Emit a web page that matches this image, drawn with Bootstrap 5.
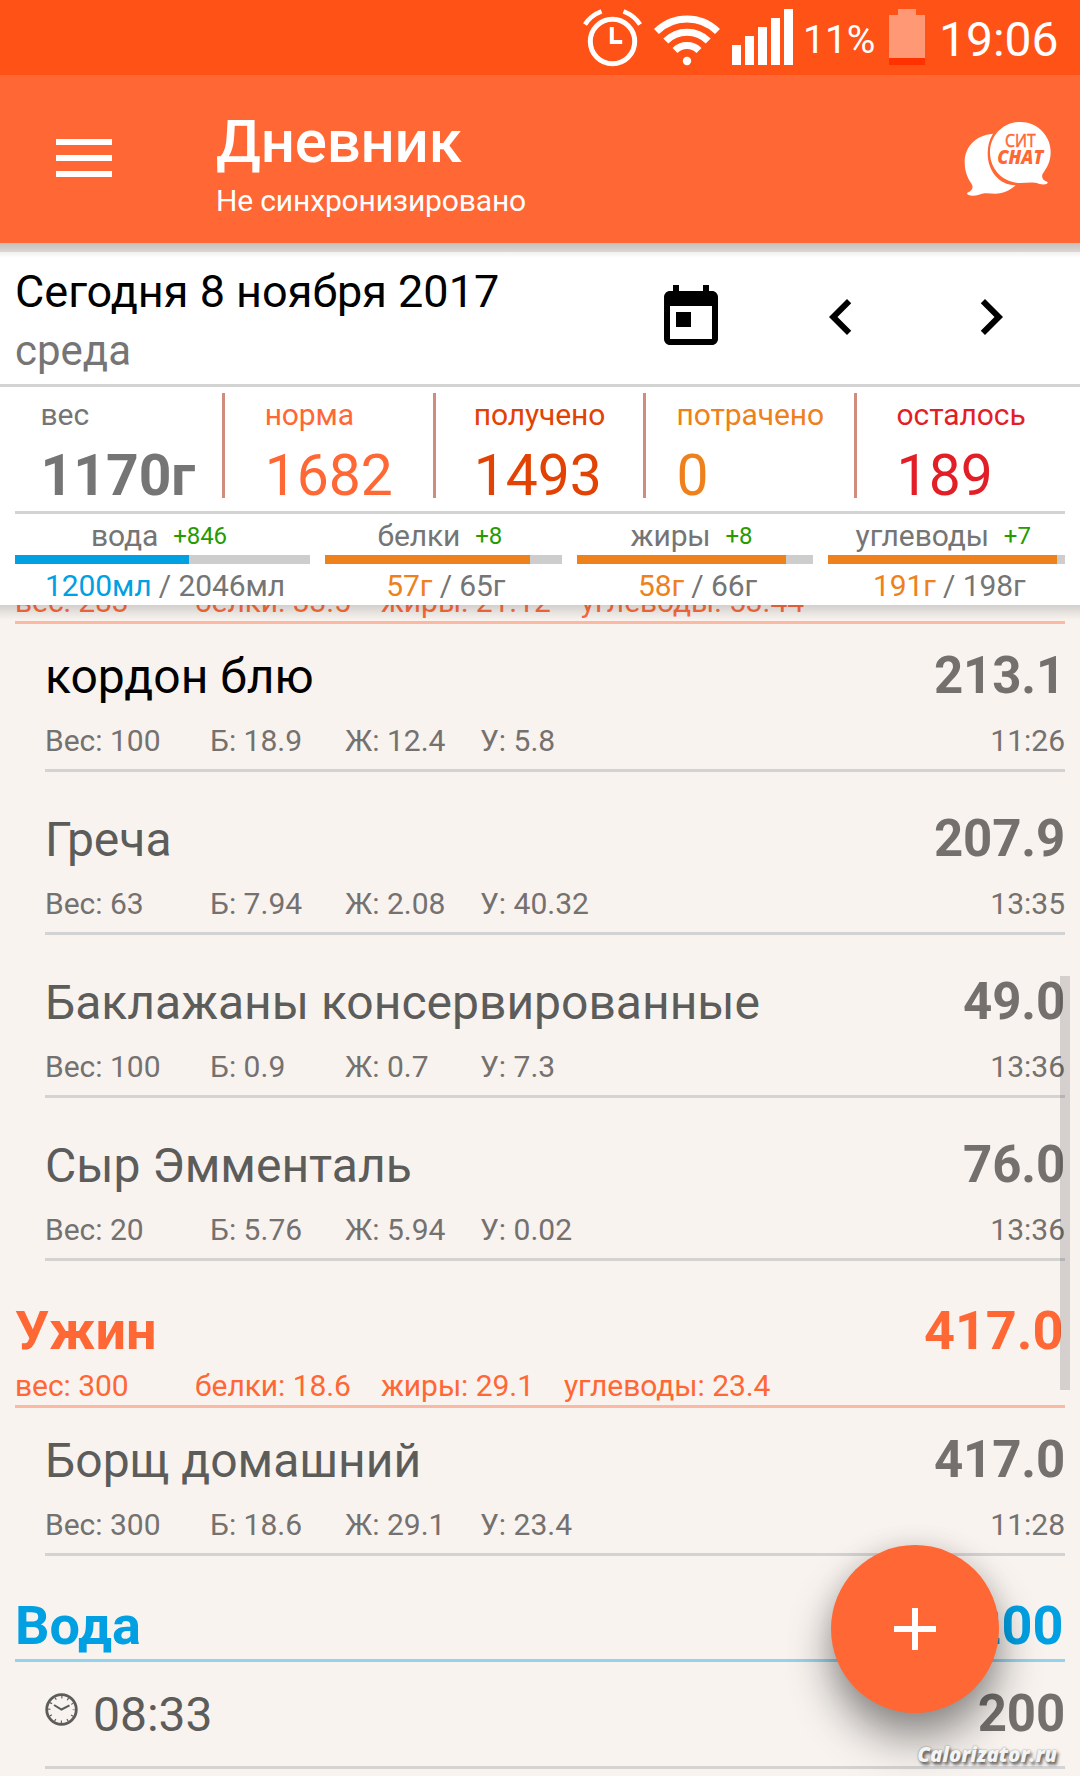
<!DOCTYPE html>
<html lang="ru">
<head>
<meta charset="utf-8">
<meta name="viewport" content="width=device-width, initial-scale=1">
<title>Дневник</title>
<link href="https://cdn.jsdelivr.net/npm/bootstrap@5.3.0/dist/css/bootstrap.min.css" rel="stylesheet">
<style>
body{font-family:Roboto,"Noto Sans",sans-serif;background:#f8f3ef;color:#757575;width:1080px;height:1776px;overflow:hidden;font-size:30px;line-height:36px}
svg{display:block;flex:none}
.statusbar{height:75px;background:#ff5217;color:#fff}
.appbar{height:168px;background:#ff6735;color:#fff;z-index:3}
.appbar::after,.summary::after{content:"";position:absolute;left:0;right:0;top:100%;height:15px;pointer-events:none}
.appbar::after{background:linear-gradient(#c5bfbc 0,#dcd6d2 8.5px,#f3f2f1 9.5px,#fff 15px)}
.summary{background:#fff;z-index:2}
.summary::after{background:linear-gradient(rgba(60,60,60,.2),rgba(60,60,60,.07) 60%,rgba(60,60,60,0))}
.burger{margin:64px 0 0 56px;width:56px}
.burger i{display:block;height:6px;background:#fff;margin-bottom:10px}
.ttl{font-size:60px;line-height:70px;font-weight:500;margin:32px 0 6px;letter-spacing:-.2px}
.subttl{letter-spacing:-.15px}
.heading{margin-left:104px}
.chat{width:90px;height:78px;margin:45px 27px 0 0}
.daterow{height:144px;border-bottom:3px solid #d3d3d3;padding:22px 53px 0 15px}
.today{font-size:45px;line-height:54px;color:#000;margin-bottom:7px}
.weekday{font-size:42px;line-height:50px}
.tools{gap:78px;margin-top:17px}
.chev{margin-top:-1px}
.stats{margin:6px 15px 0 14px;height:118px}
.stat-sep{width:3px;height:105px;background:#d08c7e;flex:none}
.stat{flex:1 1 0;padding-top:4px;letter-spacing:-.1px}
.stat-num{font-size:57px;line-height:44px;margin-top:21px;letter-spacing:0}
.nutri{margin:0 15px;border-top:3px solid #d3d3d3;height:94px;gap:15px;padding-top:4px;letter-spacing:-.1px}
.nut{flex:1 1 0}
.nut.first-nut{flex:0 0 295px}
.nut-label{height:37px;padding-right:7px}
.nut-val{padding-left:5px}
.delta{font-size:24px;line-height:24px;color:#259b00;margin-left:15px;padding-top:6px}
.nut .progress{height:9px;border-radius:0;background:#cdcdcd;margin:0 0 4px;--bs-progress-bar-transition:none}
.c-or{color:#ee811c}.c-bl{color:#00a0e3}.c-or2{color:#ff6735}.c-rd{color:#e24203}.c-red{color:#e21f26}
.bg-or{background:#ee811c}.bg-bl{background:#00a0e3}
.diary{height:1171px;overflow:hidden;padding:0 15px}
.meal{border-bottom:3px solid #fbb8a2;color:#ff6735;padding:38px 0 1px}
.meal.cut{padding-top:0;margin-top:-21px}
.meal.water{border-color:#93d3ec;color:#00a0e3;padding-bottom:2px}
.meal-t{font-size:54px;line-height:63px;font-weight:700;padding-right:1.5px}
.meal-m{margin-top:6px;letter-spacing:-.06px}
.meal-m span{margin-right:30px;white-space:nowrap}
.meal-m span:first-child{width:150px}
.food{margin-left:30px;border-bottom:3px solid #d3d3d3;padding:24px 0 10px}
.food + .food{margin-top:15px}
.food-n{font-size:48px;line-height:58px;color:#5c5c5b}
.food-k{font-size:51px;line-height:56px;font-weight:700;color:#73706e;letter-spacing:-.15px}
.food-m{margin-top:17px;color:#74716f}
.food-m span{width:135px}
.food-m span:first-child{width:165px}
.food.drink{padding-bottom:22px}
.clock{margin:7px 15px 0 0}
.scroller{right:10px;top:976px;width:10px;height:414px;background:rgba(0,0,0,.14);z-index:4}
.fab{left:831px;top:1545px;width:168px;height:168px;background:#ff6735;z-index:5;box-shadow:0 26px 44px rgba(0,0,0,.42),0 0 26px rgba(0,0,0,.1)}
.wm{right:23px;top:1740px;z-index:6;font:italic 800 20.5px/28px "Open Sans",sans-serif;letter-spacing:-.1px;color:#f4f4f4;text-shadow:2px 3px 3px rgba(0,0,0,.55),0 0 2px rgba(0,0,0,.45)}
</style>
<script src="https://cdn.jsdelivr.net/npm/bootstrap@5.3.0/dist/js/bootstrap.bundle.min.js"></script>
</head>
<body class="position-relative m-0">
<div class="statusbar d-flex">
  <svg class="ms-auto" width="510" height="75" viewBox="570 0 510 75" font-family="Roboto,sans-serif" fill="#fff">
    <g fill="none" stroke="#fff" stroke-width="5">
      <circle cx="612.5" cy="41.5" r="22.2"/>
      <path d="M585 24.5Q590.500 15.500 601.500 11.300M640 24.500Q634.500 15.500 623.500 11.300" stroke-width="4.600"/>
      <path d="M611.800 27V42H622.200" stroke-width="4"/>
    </g>
    <g fill="none" stroke="#fff" stroke-width="7">
      <path d="M656.500 31.500A43.500 43.500 0 0 1 717.500 31.500M665.800 41A30 30 0 0 1 708.200 41M675 50.500A17 17 0 0 1 699 50.500"/>
    </g>
    <circle cx="687" cy="61" r="4.200"/>
    <path d="M732 45h9v20h-9zM745 36h9v29h-9zM758 27h9v38h-9zM771 18h9v47h-9zM784 9h9v56h-9z"/>
    <path fill="#ff9875" d="M898 9h18v6h9v43h-36V15h9z"/><path fill="#ff3200" d="M889 58h36v7h-36z"/>
    <text x="803" y="53" font-size="39">11%</text>
    <text x="939" y="55.700" font-size="48">19:06</text>
  </svg>
</div>
<header class="appbar d-flex position-relative">
  <div class="burger"><i></i><i></i><i></i></div>
  <div class="heading"><div class="ttl">Дневник</div><div class="subttl">Не синхронизировано</div></div>
  <svg class="chat ms-auto" viewBox="130 90 270 234" fill="#fff">
    <path d="M220 131C166 136 135 172 135 216C135 250 147 268 157 284C162 295 155 303 142 309C142 317 160 320 178 314C197 307 210 311 227 311C252 311 272 300 288 286C236 286 204 240 204 190C204 168 209 148 220 131z"/>
    <path d="M302 96C352 96 393 136 393 186C393 215 382 233 369 251C364 262 370 271 384 276C385 284 371 285 357 281C340 275 321 279 302 279C250 279 211 238 211 187C211 137 250 96 302 96z"/>
    <g fill="#ff6735" font-family="'Open Sans',sans-serif">
      <text x="256" y="171" font-size="53" textLength="92" lengthAdjust="spacingAndGlyphs" font-weight="500" stroke="#ff6735" stroke-width="1.500">СИТ</text>
      <text x="233" y="223" font-size="58" font-weight="800" font-style="italic" textLength="138" lengthAdjust="spacingAndGlyphs">CHAT</text>
    </g>
  </svg>
</header>
<section class="summary position-relative">
  <div class="daterow d-flex justify-content-between align-items-start">
    <div><div class="today">Сегодня 8 ноября 2017</div><div class="weekday">среда</div></div>
    <div class="tools d-flex">
      <svg width="72" height="72" viewBox="0 0 24 24"><path d="M19 3h-1V1h-2v2H8V1H6v2H5c-1.110 0-1.990.9-1.990 2L3 19c0 1.100.89 2 2 2h14c1.100 0 2-.9 2-2V5c0-1.100-.9-2-2-2zm0 16H5V8h14v11zM7 10h5v5H7z"/></svg>
      <svg class="chev" width="72" height="72" viewBox="0 0 24 24"><path d="M15.410 7.410L14 6l-6 6 6 6 1.410-1.410L10.830 12z"/></svg>
      <svg class="chev" width="72" height="72" viewBox="0 0 24 24"><path d="M10 6L8.590 7.410 13.170 12l-4.580 4.590L10 18l6-6z"/></svg>
    </div>
  </div>
  <div class="stats d-flex">
    <div class="stat d-flex justify-content-center"><div><div>вес</div><div class="stat-num fw-bold">1170г</div></div></div>
    <div class="stat-sep"></div>
    <div class="stat d-flex justify-content-center c-or2"><div><div>норма</div><div class="stat-num">1682</div></div></div>
    <div class="stat-sep"></div>
    <div class="stat d-flex justify-content-center c-rd"><div><div>получено</div><div class="stat-num">1493</div></div></div>
    <div class="stat-sep"></div>
    <div class="stat d-flex justify-content-center c-or"><div><div>потрачено</div><div class="stat-num">0</div></div></div>
    <div class="stat-sep"></div>
    <div class="stat d-flex justify-content-center c-red"><div><div>осталось</div><div class="stat-num">189</div></div></div>
  </div>
  <div class="nutri d-flex">
    <div class="nut first-nut"><div class="nut-label d-flex justify-content-center"><span>вода</span><span class="delta">+846</span></div><div class="progress"><div class="progress-bar bg-bl" style="width:59%"></div></div><div class="nut-val text-center"><span class="c-bl">1200мл</span> / 2046мл</div></div>
    <div class="nut"><div class="nut-label d-flex justify-content-center"><span>белки</span><span class="delta">+8</span></div><div class="progress"><div class="progress-bar bg-or" style="width:86.5%"></div></div><div class="nut-val text-center"><span class="c-or">57г</span> / 65г</div></div>
    <div class="nut"><div class="nut-label d-flex justify-content-center"><span>жиры</span><span class="delta">+8</span></div><div class="progress"><div class="progress-bar bg-or" style="width:88.3%"></div></div><div class="nut-val text-center"><span class="c-or">58г</span> / 66г</div></div>
    <div class="nut"><div class="nut-label d-flex justify-content-center"><span>углеводы</span><span class="delta">+7</span></div><div class="progress"><div class="progress-bar bg-or" style="width:96.7%"></div></div><div class="nut-val text-center"><span class="c-or">191г</span> / 198г</div></div>
  </div>
</section>
<main class="diary">
  <div class="meal cut"><div class="meal-m d-flex mt-0"><span>вес: 283</span><span>белки: 33.5</span><span>жиры: 21.12</span><span>углеводы: 53.44</span></div></div>
  <div class="food"><div class="d-flex justify-content-between align-items-baseline"><div class="food-n text-black">кордон блю</div><div class="food-k">213.1</div></div>
    <div class="food-m d-flex"><span>Вес: 100</span><span>Б: 18.9</span><span>Ж: 12.4</span><span>У: 5.8</span><div class="ms-auto">11:26</div></div></div>
  <div class="food"><div class="d-flex justify-content-between align-items-baseline"><div class="food-n">Греча</div><div class="food-k">207.9</div></div>
    <div class="food-m d-flex"><span>Вес: 63</span><span>Б: 7.94</span><span>Ж: 2.08</span><span>У: 40.32</span><div class="ms-auto">13:35</div></div></div>
  <div class="food"><div class="d-flex justify-content-between align-items-baseline"><div class="food-n">Баклажаны консервированные</div><div class="food-k">49.0</div></div>
    <div class="food-m d-flex"><span>Вес: 100</span><span>Б: 0.9</span><span>Ж: 0.7</span><span>У: 7.3</span><div class="ms-auto">13:36</div></div></div>
  <div class="food"><div class="d-flex justify-content-between align-items-baseline"><div class="food-n">Сыр Эмменталь</div><div class="food-k">76.0</div></div>
    <div class="food-m d-flex"><span>Вес: 20</span><span>Б: 5.76</span><span>Ж: 5.94</span><span>У: 0.02</span><div class="ms-auto">13:36</div></div></div>
  <div class="meal"><div class="meal-t d-flex justify-content-between"><div>Ужин</div><div>417.0</div></div>
    <div class="meal-m d-flex"><span>вес: 300</span><span>белки: 18.6</span><span>жиры: 29.1</span><span>углеводы: 23.4</span></div></div>
  <div class="food"><div class="d-flex justify-content-between align-items-baseline"><div class="food-n">Борщ домашний</div><div class="food-k">417.0</div></div>
    <div class="food-m d-flex"><span>Вес: 300</span><span>Б: 18.6</span><span>Ж: 29.1</span><span>У: 23.4</span><div class="ms-auto">11:28</div></div></div>
  <div class="meal water"><div class="meal-t d-flex justify-content-between"><div>Вода</div><div>1200</div></div></div>
  <div class="food drink"><div class="d-flex justify-content-between align-items-start">
    <div class="food-n d-flex align-items-start"><svg class="clock" width="33" height="33" viewBox="0 0 33 33" fill="none" stroke="#5c5c5b"><circle cx="16.500" cy="16.500" r="14.800" stroke-width="2.800"/><circle cx="16.500" cy="16.500" r="12.200" stroke-width="2.400" stroke-dasharray="1.200 5.188" stroke-dashoffset=".6"/><path d="M9 12L16.500 16.500L24.500 12.300" stroke-width="2"/></svg>08:33</div><div class="food-k">200</div></div></div>
</main>
<div class="scroller position-absolute"></div>
<button class="fab btn border-0 p-0 rounded-circle position-absolute d-flex align-items-center justify-content-center"><svg width="42" height="42" viewBox="0 0 42 42"><path d="M18 0h6v18h18v6H24v18h-6V24H0v-6h18z" fill="#fff"/></svg></button>
<div class="wm position-absolute">Calorizator.ru</div>
</body>
</html>
